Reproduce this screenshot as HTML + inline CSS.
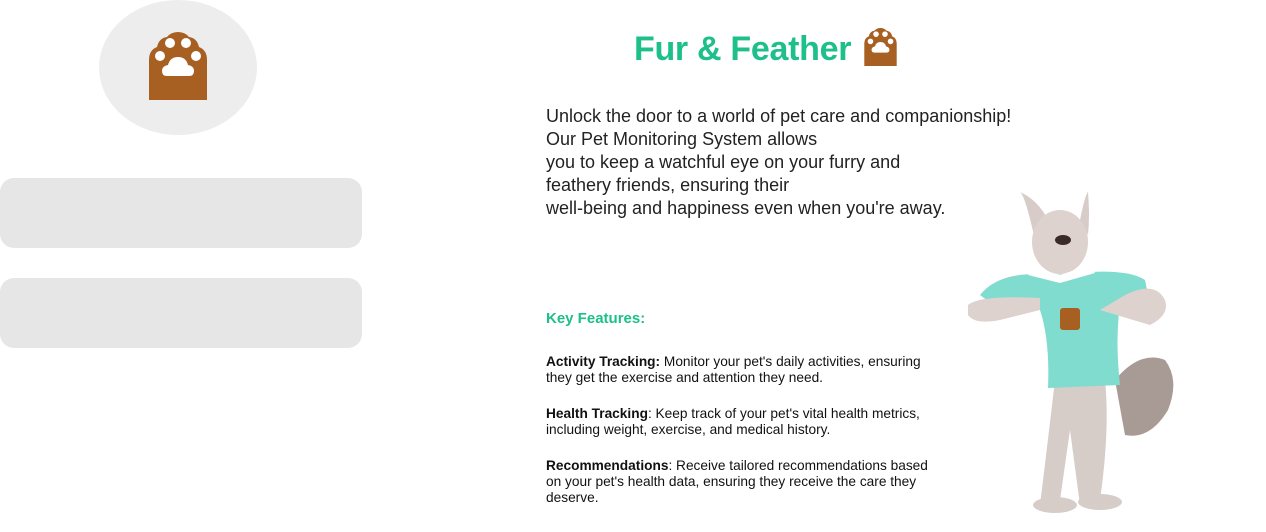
<!DOCTYPE html>
<html><head><meta charset="utf-8"><style>
body{margin:0;width:1266px;height:532px;background:#fff;font-family:"Liberation Sans",sans-serif;position:relative;overflow:hidden;color:#222}
.a{position:absolute}
.box{position:absolute;left:0;width:362px;height:70px;background:#e6e6e6;border-radius:14px}
.intro{left:546px;top:105px;font-size:18px;line-height:23px;white-space:nowrap;color:#222}
.kf{left:546px;top:310px;font-size:15px;font-weight:bold;color:#1dbf8a}
.f{left:546px;font-size:13.7px;line-height:16px;white-space:nowrap;color:#111}
</style></head><body>
<div class="a" style="left:99px;top:0;width:158px;height:135px;border-radius:50%;background:#ededed"></div>
<svg class="a" style="left:149px;top:32px" width="58" height="68" viewBox="0 0 58 68">
<path d="M0 68V28Q0 18 8 15Q10 6 18 5Q22 0 29 0Q36 0 40 5Q48 6 50 15Q58 18 58 28V68Z" fill="#a85f22"/>
<circle cx="21" cy="11" r="5" fill="#fff"/><circle cx="37" cy="11" r="5" fill="#fff"/>
<circle cx="11" cy="24" r="5" fill="#fff"/><circle cx="47" cy="24" r="5" fill="#fff"/>
<path d="M18 44Q13 44 13 39Q13 34 19 33Q21 25 29 25Q37 25 39 33Q45 34 45 39Q45 44 40 44Z" fill="#fff"/>
</svg>
<div class="box" style="top:178px"></div>
<div class="box" style="top:278px"></div>
<div class="a" style="left:634px;top:30px;font-size:34px;font-weight:bold;color:#1dbf8a;letter-spacing:-0.3px">Fur &amp; Feather</div>
<svg class="a" style="left:864px;top:28px" width="33" height="38" viewBox="0 0 58 68">
<path d="M0 68V28Q0 18 8 15Q10 6 18 5Q22 0 29 0Q36 0 40 5Q48 6 50 15Q58 18 58 28V68Z" fill="#a85f22"/>
<circle cx="21" cy="11" r="5" fill="#fff"/><circle cx="37" cy="11" r="5" fill="#fff"/>
<circle cx="11" cy="24" r="5" fill="#fff"/><circle cx="47" cy="24" r="5" fill="#fff"/>
<path d="M18 44Q13 44 13 39Q13 34 19 33Q21 25 29 25Q37 25 39 33Q45 34 45 39Q45 44 40 44Z" fill="#fff"/>
</svg>
<div class="a intro">Unlock the door to a world of pet care and companionship!<br>Our Pet Monitoring System allows<br>you to keep a watchful eye on your furry and<br>feathery friends, ensuring their<br>well-being and happiness even when you're away.</div>
<div class="a kf">Key Features:</div>
<div class="a f" style="top:354px"><b>Activity Tracking:</b> Monitor your pet's daily activities, ensuring<br>they get the exercise and attention they need.</div>
<div class="a f" style="top:406px"><b>Health Tracking</b>: Keep track of your pet's vital health metrics,<br>including weight, exercise, and medical history.</div>
<div class="a f" style="top:458px"><b>Recommendations</b>: Receive tailored recommendations based<br>on your pet's health data, ensuring they receive the care they<br>deserve.</div>
<svg class="a" style="left:940px;top:180px" width="260" height="340" viewBox="0 0 260 340">
<path d="M175 200Q200 170 225 180Q240 200 228 230Q210 260 185 255Z" fill="#a89a94"/>
<path d="M115 200L165 200Q170 250 160 320L140 325L130 250L120 320L100 325Q108 260 115 200Z" fill="#d6ccc8"/>
<ellipse cx="115" cy="325" rx="22" ry="8" fill="#d6ccc8"/><ellipse cx="160" cy="322" rx="22" ry="8" fill="#d6ccc8"/>
<path d="M95 60Q85 15 80 12Q98 20 108 40Z" fill="#d8ccc8"/><path d="M140 40Q145 15 148 12Q150 35 148 55Z" fill="#d8ccc8"/>
<ellipse cx="120" cy="62" rx="28" ry="32" fill="#ddd2ce"/>
<ellipse cx="123" cy="60" rx="8" ry="5" fill="#3a2a28"/>
<path d="M40 115Q60 90 110 95L150 92Q190 90 205 100L210 125L180 125Q175 160 180 205L108 208Q110 160 100 130L60 130Z" fill="#7fdccf"/>
<path d="M88 95L120 103L155 93L150 85L120 95L95 88Z" fill="#fff"/>
<path d="M28 125Q40 115 100 118L100 130L60 140Q35 145 28 135Z" fill="#ddd2ce"/>
<path d="M225 120Q230 135 210 145L160 130L185 115Q215 100 225 120Z" fill="#ddd2ce"/>
<rect x="120" y="128" width="20" height="22" rx="3" fill="#a85f22"/>
</svg>
</body></html>
